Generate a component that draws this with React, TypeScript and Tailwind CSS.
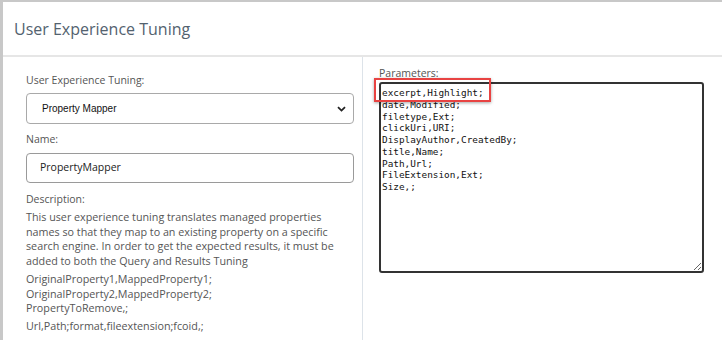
import React from 'react'

const PARAMS = [
  'excerpt,Highlight;',
  'date,Modified;',
  'filetype,Ext;',
  'clickUri,URI;',
  'DisplayAuthor,CreatedBy;',
  'title,Name;',
  'Path,Url;',
  'FileExtension,Ext;',
  'Size,;',
].join('\n')

export default function App() {
  return (
    <div className="w-[722px] h-[340px] overflow-hidden bg-[#c8c8c8] pt-[2px] pl-[3px] font-['Open_Sans',sans-serif]">
      <div className="h-full bg-white flex flex-col">
        {/* Header */}
        <div className="h-[55px] shrink-0 flex items-center pl-[11px] border-b-2 border-[#e6e6e6]">
          <h1 className="text-[16px] text-[#53626f] leading-none">User Experience Tuning</h1>
        </div>

        {/* Body */}
        <div className="flex flex-1">
          <div className="w-[360px] shrink-0 border-r border-[#dde3e9] pl-[23px] pr-[8px] pt-[16px] text-[10.5px] text-[#555]">
            <label className="block leading-[14px] mb-[6px]">User Experience Tuning:</label>
            <div className="h-[31px] rounded-[4px] border border-[#a9a9a9] flex items-center justify-between pl-[15px] pr-[7px]">
              <span className="font-['Liberation_Sans',Arial,sans-serif] text-[10px] text-[#111]">Property Mapper</span>
              <svg width="9" height="6" viewBox="0 0 9 6" className="text-[#222]">
                <path d="M1 1.2 L4.5 4.6 L8 1.2" fill="none" stroke="currentColor" strokeWidth="1.8" />
              </svg>
            </div>

            <label className="block leading-[14px] mt-[8px] mb-[7px]">Name:</label>
            <div className="h-[30px] rounded-[4px] border border-[#9a9a9a] flex items-center pl-[13px] text-[#222]">
              PropertyMapper
            </div>

            <label className="block leading-[14px] mt-[9px]">Description:</label>
            <div className="text-[10.75px] leading-[14.5px]">
              <p className="mt-[4px]">
                This user experience tuning translates managed properties names so that they map to an existing property on a specific search engine. In order to get the expected results, it must be added to both the Query and Results Tuning
              </p>
              <p className="mt-[4px]">
                OriginalProperty1,MappedProperty1;
                <br />
                OriginalProperty2,MappedProperty2;
                <br />
                PropertyToRemove,;
              </p>
              <p className="mt-[3.5px]">Url,Path;format,fileextension;fcoid,;</p>
            </div>
          </div>

          <div className="flex-1 relative pl-[16px] pr-[18px] pt-[9px] text-[10.5px] text-[#555]">
            <label className="block leading-[14px] mb-[2px]">Parameters:</label>
            <textarea
              readOnly
              value={PARAMS}
              className="block w-full h-[191px] border-2 border-[#333] rounded-[3px] px-[1px] pt-[3px] font-['DejaVu_Sans_Mono',monospace] text-[9.4px] leading-[11.75px] text-[#111] outline-none"
            />
            {/* highlight box */}
            <div className="absolute left-[11px] top-[21px] w-[117px] h-[24px] border-[2.5px] border-[#e84342] shadow-[0_1px_3px_rgba(0,0,0,0.35)]" />
          </div>
        </div>
      </div>
    </div>
  )
}
